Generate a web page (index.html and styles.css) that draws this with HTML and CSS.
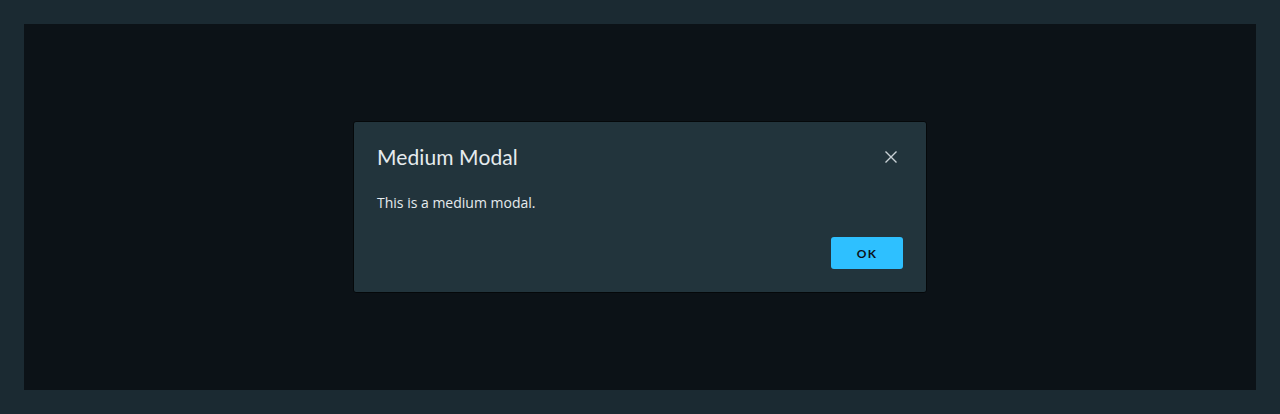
FILE: index.html
```html
<!DOCTYPE html>
<html>
<head>
<meta charset="utf-8">
<link rel="stylesheet" href="styles.css">
</head>
<body>
<div class="stage">
  <div class="modal">
    <div class="modal-header">
      <h3 class="modal-title">Medium Modal</h3>
      <button class="close" aria-label="Close">
        <svg width="14" height="14" viewBox="0 0 14 14"><path d="M1.5 1.5 L12.5 12.5 M12.5 1.5 L1.5 12.5" stroke="#c9d1d6" stroke-width="1.4" fill="none"/></svg>
      </button>
    </div>
    <p class="modal-body">This is a medium modal.</p>
    <div class="modal-footer">
      <button class="btn-primary">OK</button>
    </div>
  </div>
</div>
</body>
</html>
```
FILE: styles.css
```css
html, body {
  margin: 0;
  padding: 0;
}
body {
  background: #1b2a32;
  font-family: Lato, "Open Sans", sans-serif;
  padding: 24px;
  height: 414px;
  box-sizing: border-box;
}
.stage {
  background: #0c1217;
  height: 366px;
  display: flex;
  justify-content: center;
  align-items: flex-start;
  padding-top: 97px;
  box-sizing: border-box;
}
.modal {
  width: 574px;
  height: 172px;
  box-sizing: border-box;
  background: #22343c;
  border: 1px solid #05080a;
  border-radius: 3px;
  padding: 22px 23px 0 23px;
  display: flex;
  flex-direction: column;
}
.modal-header {
  display: flex;
  justify-content: space-between;
  align-items: center;
  height: 24px;
}
.modal-title {
  margin: 0;
  font-size: 21px;
  font-weight: 400;
  color: #e6ebee;
  letter-spacing: 0.1px;
}
.close {
  background: none;
  border: 0;
  padding: 0;
  margin-top: 2px;
  margin-right: 5px;
  width: 14px;
  height: 14px;
  display: flex;
}
.modal-body {
  margin: 26px 0 0 0;
  font-family: "Open Sans", Lato, sans-serif;
  font-size: 14px;
  color: #e6ebee;
  line-height: 18px;
}
.modal-footer {
  display: flex;
  justify-content: flex-end;
  margin-top: 25px;
}
.btn-primary {
  width: 72px;
  height: 32px;
  background: #2ec0ff;
  border: 0;
  border-radius: 3px;
  font-family: Lato, "Open Sans", sans-serif;
  font-size: 12px;
  font-weight: 700;
  letter-spacing: 1.2px;
  color: #0c1217;
}
```
